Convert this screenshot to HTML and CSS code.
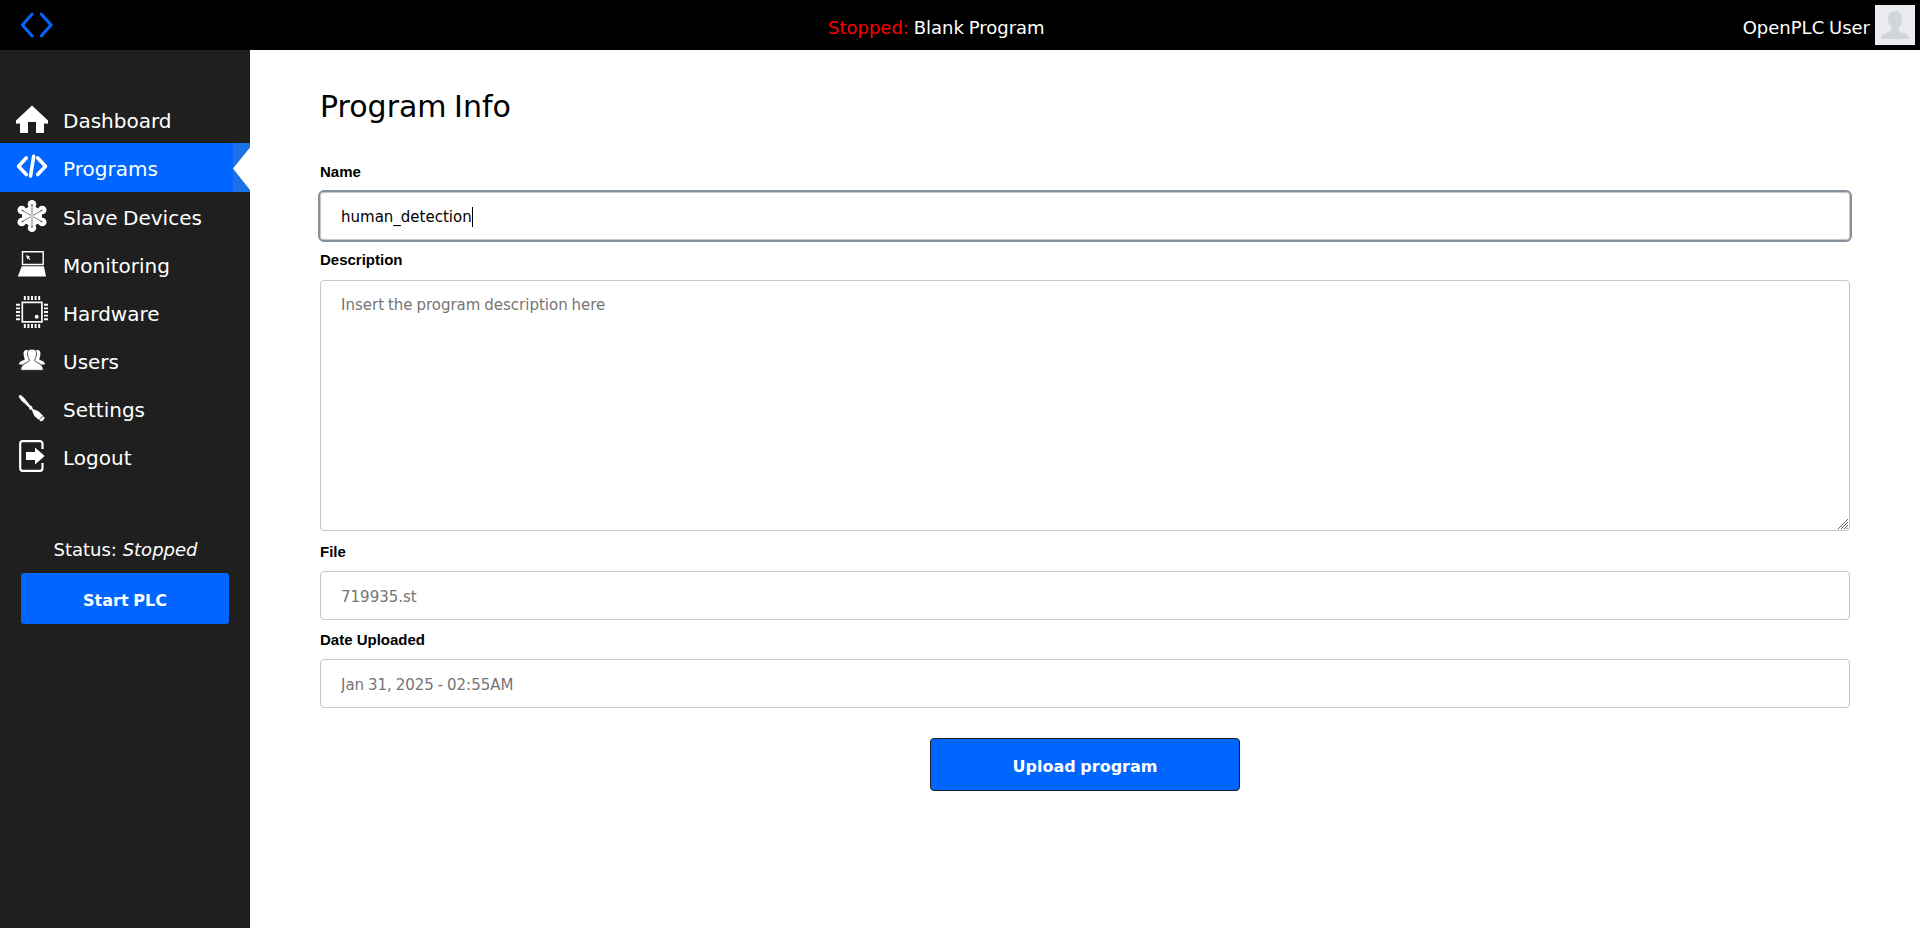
FILE: index.html
```html
<!DOCTYPE html>
<html lang="en">
<head>
<meta charset="utf-8">
<title>OpenPLC Webserver</title>
<link rel="stylesheet" href="styles.css">
</head>
<body>
<header class="top">
  <svg class="logo" viewBox="0 0 34 28"><path d="M12.2 3 2.4 14l9.8 11M21.2 3 31 14l-9.8 11"/></svg>
  <p class="running"><span class="stopped">Stopped:</span> Blank Program</p>
  <div class="user"><span>OpenPLC User</span>
    <svg class="avatar" viewBox="0 0 40 40"><rect width="40" height="40" fill="#e9ebf0"/><path fill="#d1d6dc" d="M20 6c4.500 0 7 3 7 7.500 0 4-1.500 7-3.500 9 0 4 1.500 4.500 5 5.500 4 1.200 5.500 2 5.500 6H6c0-4 1.500-4.800 5.500-6 3.500-1 5-1.500 5-5.500-2-2-3.500-5-3.500-9C13 9 15.500 6 20 6z"/></svg>
  </div>
</header>
<div class="layout">
  <aside class="side">
    <nav class="menu">
      <a class="item"><svg class="icon" viewBox="0 0 32 32"><path class="fill" d="M16 2.500 31.700 17.300a1.600 1.600 0 0 1-1.300 3.200H28v9.500h-8V19h-8v11H4v-9.500H1.600a1.600 1.600 0 0 1-1.300-3.200z"/></svg>Dashboard</a>
      <a class="item active"><svg class="icon" viewBox="0 0 32 32"><path class="line thick" d="M10.300 7 2.500 15.300l7.800 8.200M21.700 7l7.800 8.300-7.800 8.200M17.700 5.400 14.500 25"/></svg>Programs<svg class="notch" viewBox="0 0 17 49"><rect width="17" height="49" fill="#1c71e4"/><path fill="#fff" d="M17 4.500 0 25.500 17 47z"/></svg></a>
      <a class="item"><svg class="icon" viewBox="0 0 32 32"><g class="fill"><path d="M16 5 26 10.500v11L16 27 6 21.500v-11z"/><circle cx="16" cy="4.300" r="4.300"/><circle cx="16" cy="27.700" r="4.300"/><circle cx="5.800" cy="10" r="4.300"/><circle cx="26.200" cy="10" r="4.300"/><circle cx="5.800" cy="22" r="4.300"/><circle cx="26.200" cy="22" r="4.300"/></g><path class="spokes" d="M16 5v22M6.500 10.500l19 11M25.500 10.500l-19 11"/><g class="dots"><circle cx="16" cy="5" r=".8"/><circle cx="16" cy="27" r=".8"/><circle cx="6.500" cy="10.500" r=".8"/><circle cx="25.500" cy="21.500" r=".8"/><circle cx="25.500" cy="10.500" r=".8"/><circle cx="6.500" cy="21.500" r=".8"/></g><circle cx="16" cy="16" r="1.300" fill="#ddd"/></svg>Slave Devices</a>
      <a class="item"><svg class="icon" viewBox="0 0 32 32"><path class="line" stroke-width="1.400" d="M6.500 3.800h20.700v12.700H6.500z"/><path class="fill" d="M5.800 18.200h22.100L30 28.600H1.800zM10 7l4.300 1.700-1.500.8 1.700 1.900-.8.700-1.700-1.900-.7 1.300z"/></svg>Monitoring</a>
      <a class="item"><svg class="icon" viewBox="0 0 32 32"><path class="line" stroke-width="1.700" d="M6.300 6.300h19.600v19.600H6.300z"/><circle class="fill" cx="20.700" cy="20.700" r="2"/><path class="line" stroke-width="1.900" d="M8.800 0v4M12.400 0v4M16 0v4M19.600 0v4M23.200 0v4M8.800 28v4M12.400 28v4M16 28v4M19.600 28v4M23.200 28v4M0 8.800h4M0 12.400h4M0 16h4M0 19.600h4M0 23.200h4M28 8.800h4M28 12.400h4M28 16h4M28 19.600h4M28 23.200h4"/></svg>Hardware</a>
      <a class="item"><svg class="icon" viewBox="0 0 32 32"><g class="fill"><path d="M11 6c-3.200 0-3.800 2.300-3.300 5 .2 2.200 1 3 1 4.300C8 17 3 16.500 3 20.500h10V6zM21 6c3.200 0 3.800 2.300 3.300 5-.2 2.200-1 3-1 4.300.7 1.700 5.700 1.200 5.700 5.200H19V6z"/><path stroke="#1f1f1f" stroke-width=".8" d="M16 5.200c4 0 4.900 2.700 4.300 5.800-.2 2.200-1.300 3-1.500 5.300.2 3 8.500 2.200 8.500 10H4.700c0-7.800 8.300-7 8.500-10-.2-2.300-1.300-3.100-1.500-5.300-.6-3.100.3-5.800 4.300-5.800z"/></g></svg>Users</a>
      <a class="item"><svg class="icon" viewBox="0 0 32 32"><path class="fill" d="M3 3.400 4.800 3l3.400 3 6 7.600 1.800.7.800 2.700 5.700 2.300 5.800 5.700c1 1.500-2 5-3.800 4.200L18.300 24l-2.500-5.900-2.400-.9-.6-1.900-7.500-6.800L2.800 5z"/><path stroke="#1f1f1f" stroke-width=".7" fill="none" d="M23.500 28.500c0-2 2-4 4.300-4"/></svg>Settings</a>
      <a class="item"><svg class="icon" viewBox="0 0 32 32"><path class="line" stroke-width="2.200" d="M26.500 9V3.700a2.500 2.500 0 0 0-2.500-2.500H6.700a2.500 2.500 0 0 0-2.500 2.500v24.600a2.500 2.500 0 0 0 2.500 2.500H24a2.500 2.500 0 0 0 2.500-2.500V23"/><path class="fill" d="M10 12h9V7.500l9.700 8.500-9.700 8.500V20h-9z"/></svg>Logout</a>
    </nav>
    <p class="status">Status: <i>Stopped</i></p>
    <a class="start">Start PLC</a>
  </aside>
  <main class="content">
    <h2 class="title">Program Info</h2>
    <form class="form">
      <label class="label">Name</label>
      <div class="field focused">human_detection<span class="caret"></span></div>
      <label class="label tall">Description</label>
      <div class="area-wrap">
        <textarea class="field area" placeholder="Insert the program description here"></textarea>
        <svg class="grip" viewBox="0 0 10 10"><path d="M0 10 10 0M3 10l7-7M6 10l4-4M8.500 10 10 8.500"/></svg>
      </div>
      <label class="label tall file">File</label>
      <input class="field" placeholder="719935.st" disabled>
      <label class="label date">Date Uploaded</label>
      <input class="field" placeholder="Jan 31, 2025 - 02:55AM" disabled>
      <a class="upload">Upload program</a>
    </form>
  </main>
</div>
</body>
</html>
```
FILE: styles.css
```css
* { box-sizing: border-box; }
body { margin: 0; height: 928px; overflow: hidden; background: #fff; font-family: "DejaVu Sans", sans-serif; word-spacing: -.06em; }
.top { display: grid; grid-template-columns: 808px auto 1fr; height: 50px; padding: 0 5px 0 20px; background: #000; color: #fff; font-size: 18px; }
.logo { width: 34px; height: 28px; margin-top: 11px; fill: none; stroke: #06f; stroke-width: 3; stroke-linecap: round; }
.running { margin: 0; line-height: 55px; }
.stopped { color: #f00; }
.user { display: flex; justify-content: flex-end; gap: 5px; line-height: 55px; }
.avatar { width: 40px; height: 40px; margin-top: 5px; }
.layout { display: flex; height: 878px; }
.side { width: 250px; padding-top: 45px; background: #1f1f1f; color: #fff; }
.menu { display: flex; flex-direction: column; }
.item { display: flex; height: 48px; padding: 8px 0 0 16px; gap: 15px; font-size: 20px; line-height: 36px; }
.active { height: 49px; background: #06f; }
.icon { width: 32px; height: 32px; flex: none; }
.fill { fill: #fff; }
.line { fill: none; stroke: #fff; }
.thick { stroke-width: 3.6; stroke-linecap: round; stroke-linejoin: round; }
.spokes { stroke: #555; stroke-width: .8; }
.dots { fill: #333; }
.notch { width: 17px; height: 49px; margin: -8px 0 0 auto; }
.status { margin: 55px 0 0; padding-left: 1px; text-align: center; font-size: 18px; line-height: 30px; word-spacing: 0; }
.start { display: block; width: 208px; height: 51px; margin: 8px auto 0; border-radius: 3px; background: #06f; text-align: center; font-size: 16px; font-weight: bold; line-height: 55px; }
.content { flex: 1; padding: 36px 70px 0; }
.title { margin: 0; font-size: 30px; font-weight: normal; line-height: 42px; word-spacing: -2px; }
.form { display: flex; flex-direction: column; margin-top: 25px; }
.label { height: 39px; padding-top: 8px; font: bold 15px/22px "Liberation Sans", sans-serif; word-spacing: 0; }
.tall { height: 40px; padding-top: 9px; }
.file { padding-top: 10px; }
.date { padding-top: 9px; }
.field { width: 100%; height: 49px; padding: 2px 20px 0; border: 1px solid #c6c6c6; border-radius: 4px; background: #fff; color: #000; font: 15px/46px "DejaVu Sans", sans-serif; word-spacing: -.06em; }
.field::placeholder { color: #757575; }
.focused { display: flex; align-items: center; height: 48px; padding-top: 1px; outline: 2px solid #85919d; }
.caret { width: 1px; height: 20px; background: #000; }
.area-wrap { position: relative; height: 251px; }
.area { display: block; height: 251px; padding: 13px 20px; line-height: 22px; resize: none; }
.grip { position: absolute; right: 2px; bottom: 2px; width: 10px; height: 10px; fill: none; stroke: #666; stroke-width: 1; }
.upload { align-self: center; width: 310px; height: 53px; margin-top: 30px; border: 1px solid #1f1f1f; border-radius: 4px; background: #06f; color: #fff; text-align: center; font-size: 16px; font-weight: bold; line-height: 55px; }
```
